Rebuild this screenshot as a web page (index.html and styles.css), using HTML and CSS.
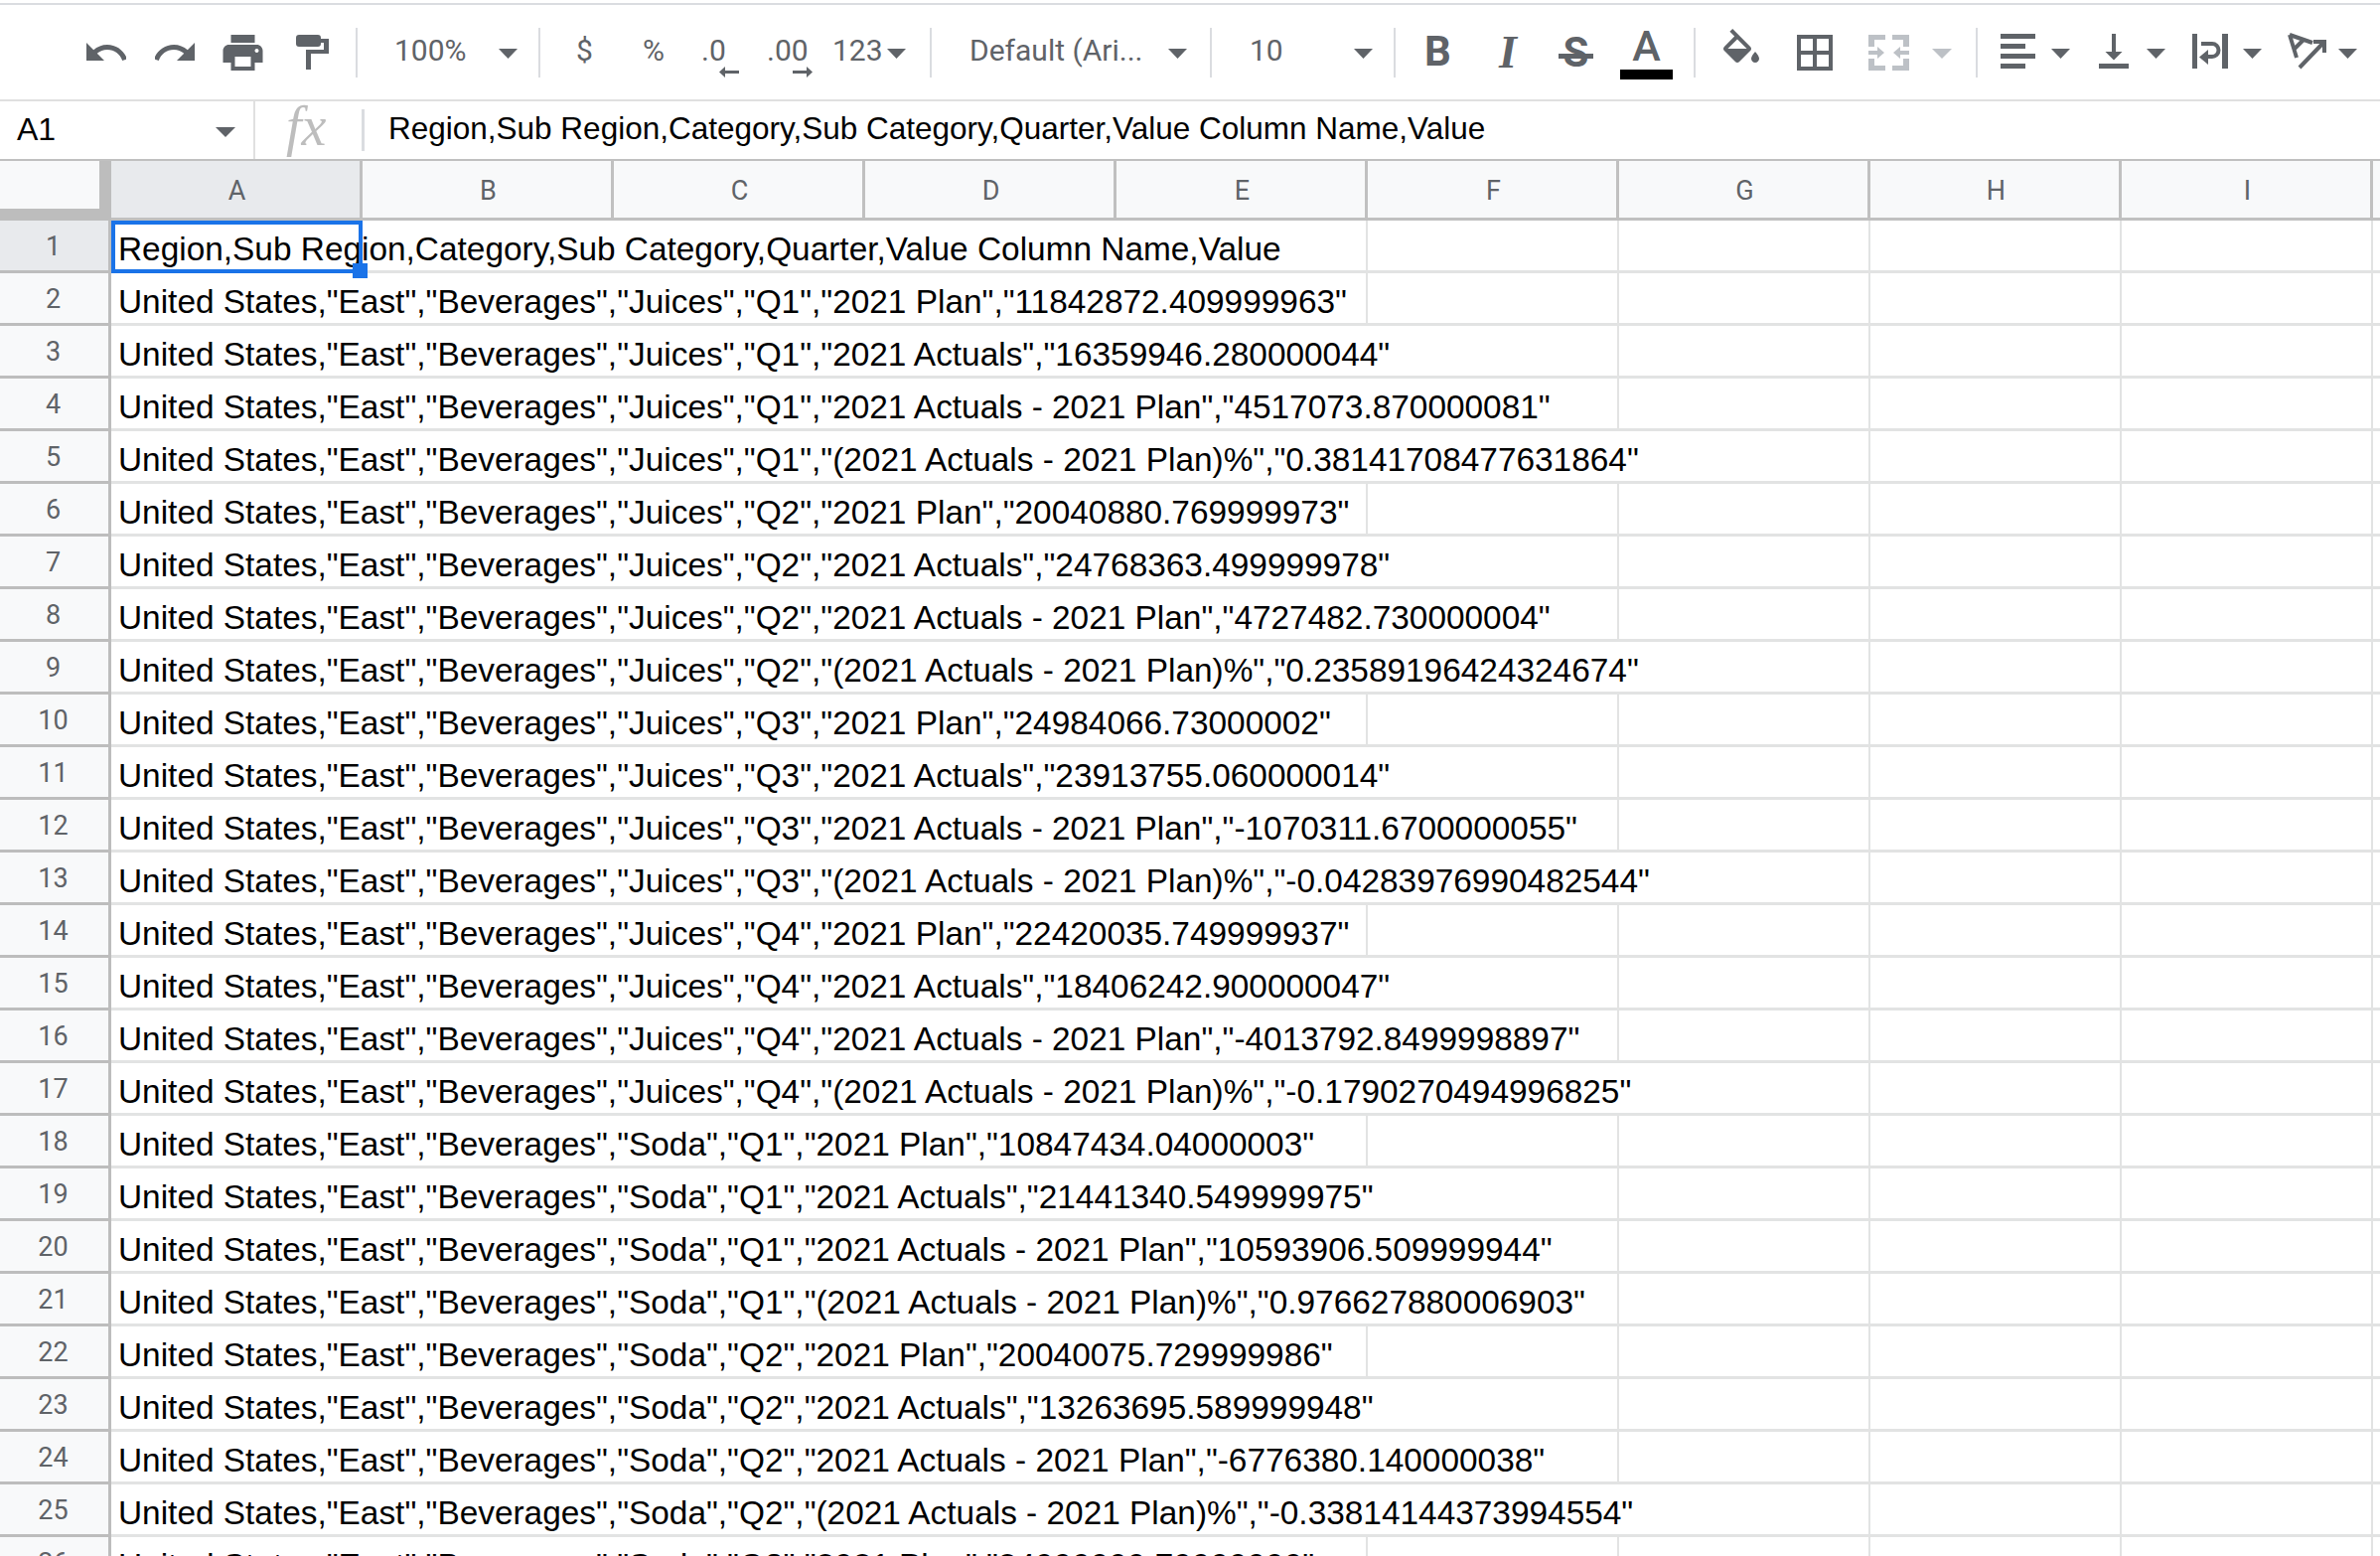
FILE: index.html
```html
<!DOCTYPE html>
<html lang="en">
<head>
    <meta charset="UTF-8">
    <meta name="viewport" content="width=device-width, initial-scale=1.0">
    <title>Sheet</title>
    <link rel="stylesheet" href="styles.css">
</head>
<body>
    <div class="top-gap"></div>

    <div class="toolbar">
        <svg class="ic undo" width="40" height="48" viewBox="2 0 20 24"><path d="M12.5 8c-2.65 0-5.05.99-6.9 2.6L2 7v9h9l-3.62-3.62c1.39-1.16 3.16-1.88 5.12-1.88 3.54 0 6.55 2.31 7.6 5.5l2.37-.78C21.08 11.03 17.15 8 12.5 8z"/></svg>
        <svg class="ic redo" width="40" height="48" viewBox="2 0 20 24"><path d="M18.4 10.6C16.55 8.99 14.15 8 11.5 8c-4.65 0-8.58 3.03-9.96 7.22L3.9 16c1.05-3.19 4.05-5.5 7.6-5.5 1.95 0 3.73.72 5.12 1.88L13 16h9V7l-3.6 3.6z"/></svg>
        <svg class="ic print" width="41" height="48" viewBox="2 0 20 24"><path d="M19 8H5c-1.66 0-3 1.34-3 3v6h4v4h12v-4h4v-6c0-1.66-1.34-3-3-3zm-3 11H8v-5h8v5zm3-7c-.55 0-1-.45-1-1s.45-1 1-1 1 .45 1 1-.45 1-1 1zm-1-9H6v4h12V3z"/></svg>
        <svg class="ic paint" width="33" height="48" viewBox="0 0 33 48"><path d="M3 6h19a3 3 0 0 1 3 3v1h8v15H15v16h-5V21h18v-7h-3v1a3 3 0 0 1-3 3H3a3 3 0 0 1-3-3V9a3 3 0 0 1 3-3z"/></svg>
        <span class="sep s1"></span>
        <span class="tb-text zoom-level">100%</span>
        <svg class="ic caret c-zoom" width="19" height="48" viewBox="0 0 19 48"><path d="M0 20h19l-9.5 10z"/></svg>
        <span class="sep s2"></span>
        <span class="tb-text dollar">$</span>
        <span class="tb-text percent">%</span>
        <span class="tb-text dec dec-less">.0<svg class="dec-arrow" width="20" height="11" viewBox="0 0 20 11"><path d="M0 5.5L6 0v4h14v3H6v4z"/></svg></span>
        <span class="tb-text dec dec-more">.00<svg class="dec-arrow" width="20" height="11" viewBox="0 0 20 11"><path d="M20 5.5L14 0v4H0v3h14v4z"/></svg></span>
        <span class="tb-text num-format">123</span>
        <svg class="ic caret c-num" width="19" height="48" viewBox="0 0 19 48"><path d="M0 20h19l-9.5 10z"/></svg>
        <span class="sep s3"></span>
        <span class="tb-text font-name">Default (Ari...</span>
        <svg class="ic caret c-font" width="19" height="48" viewBox="0 0 19 48"><path d="M0 20h19l-9.5 10z"/></svg>
        <span class="sep s4"></span>
        <span class="tb-text font-size">10</span>
        <svg class="ic caret c-size" width="19" height="48" viewBox="0 0 19 48"><path d="M0 20h19l-9.5 10z"/></svg>
        <span class="sep s5"></span>
        <span class="fmt bold">B</span>
        <span class="fmt italic">I</span>
        <span class="fmt strike">S</span>
        <span class="fmt text-color">A<span class="color-bar"></span></span>
        <span class="sep s6"></span>
        <svg class="ic fill" width="36" height="48" viewBox="3 0 18 24"><path d="M16.56 8.94L7.62 0 6.21 1.41l2.38 2.38-5.15 5.15c-.59.59-.59 1.54 0 2.12l5.5 5.5c.29.29.68.44 1.06.44s.77-.15 1.06-.44l5.5-5.5c.59-.58.59-1.53 0-2.12zM5.21 10L10 5.21 14.79 10H5.21zM19 11.5s-2 2.17-2 3.5c0 1.1.9 2 2 2s2-.9 2-2c0-1.33-2-3.5-2-3.5z"/></svg>
        <svg class="ic borders" width="36" height="48" viewBox="3 0 18 24"><path d="M3 3v18h18V3H3zm8 16H5v-6h6v6zm0-8H5V5h6v6zm8 8h-6v-6h6v6zm0-8h-6V5h6v6z"/></svg>
        <svg class="ic off merge" width="41" height="48" viewBox="0 0 41 48"><path d="M0 6h17v5H6v7H0zM24 6h17v12h-6v-7H24zM0 30h6v7h11v5H0zM35 30h6v12H24v-5h11zM0 22h9v-4l7 6-7 6v-4H0zM41 22h-9v-4l-7 6 7 6v-4h9z"/></svg>
        <svg class="ic off caret c-merge" width="20" height="48" viewBox="0 0 20 48"><path d="M0 20h20l-10 10z"/></svg>
        <span class="sep s7"></span>
        <svg class="ic align" width="35" height="48" viewBox="0 0 35 48"><path d="M0 5h35v5H0zM0 15h25v5H0zM0 25h35v5H0zM0 35h25v5H0z"/></svg>
        <svg class="ic caret c-align" width="19" height="48" viewBox="0 0 19 48"><path d="M0 20h19l-9.5 10z"/></svg>
        <svg class="ic valign" width="30" height="48" viewBox="0 0 30 48"><path d="M13 5h4v18h6.5L15 31.5 6.5 23H13zM0 35h30v5H0z"/></svg>
        <svg class="ic caret c-valign" width="19" height="48" viewBox="0 0 19 48"><path d="M0 20h19l-9.5 10z"/></svg>
        <svg class="ic wrap" width="36" height="48" viewBox="0 0 36 48"><path d="M0 5h5v35H0zM30 5h6v35h-6zM9 13h11a8.500 8.500 0 0 1 0 17h-5v-4h5a4.500 4.500 0 0 0 0-9H9zM16 21v15l-9-7.500z"/></svg>
        <svg class="ic caret c-wrap" width="19" height="48" viewBox="0 0 19 48"><path d="M0 20h19l-9.500 10z"/></svg>
        <svg class="ic rotate" width="39" height="48" viewBox="0 0 39 48"><g transform="translate(0 4)" fill="none" stroke="#5f6368" stroke-width="4"><path d="M2 2l23 8M2 2l7 23M16 7L6 17M12 35L37 9M26 9h11v11"/></g></svg>
        <svg class="ic caret c-rotate" width="19" height="48" viewBox="0 0 19 48"><path d="M0 20h19l-9.500 10z"/></svg>
    </div>

    <div class="formula-bar">
        <div class="name-box">
            <span class="cell-ref">A1</span>
            <svg class="ic" width="20" height="10" viewBox="0 0 20 10"><path d="M0 0h20L10 10z"/></svg>
        </div>
        <span class="fx">fx</span>
        <span class="fx-sep"></span>
        <span class="formula-text">Region,Sub Region,Category,Sub Category,Quarter,Value Column Name,Value</span>
    </div>

    <div class="col-headers">
        <div class="corner"></div>
        <div class="col active">A</div>
        <div class="col">B</div>
        <div class="col">C</div>
        <div class="col">D</div>
        <div class="col">E</div>
        <div class="col">F</div>
        <div class="col">G</div>
        <div class="col">H</div>
        <div class="col">I</div>
        <div class="col"></div>
    </div>

    <div class="sheet">
        <div class="row"><div class="num active">1</div><div class="cells"><div class="txt span5">Region,Sub Region,Category,Sub Category,Quarter,Value Column Name,Value<div class="selection"></div><div class="handle"></div></div></div></div>
        <div class="row"><div class="num">2</div><div class="cells"><div class="txt span5">United States,"East","Beverages","Juices","Q1","2021 Plan","11842872.409999963"</div></div></div>
        <div class="row"><div class="num">3</div><div class="cells"><div class="txt span6">United States,"East","Beverages","Juices","Q1","2021 Actuals","16359946.280000044"</div></div></div>
        <div class="row"><div class="num">4</div><div class="cells"><div class="txt span6">United States,"East","Beverages","Juices","Q1","2021 Actuals - 2021 Plan","4517073.870000081"</div></div></div>
        <div class="row"><div class="num">5</div><div class="cells"><div class="txt span7">United States,"East","Beverages","Juices","Q1","(2021 Actuals - 2021 Plan)%","0.38141708477631864"</div></div></div>
        <div class="row"><div class="num">6</div><div class="cells"><div class="txt span5">United States,"East","Beverages","Juices","Q2","2021 Plan","20040880.769999973"</div></div></div>
        <div class="row"><div class="num">7</div><div class="cells"><div class="txt span6">United States,"East","Beverages","Juices","Q2","2021 Actuals","24768363.499999978"</div></div></div>
        <div class="row"><div class="num">8</div><div class="cells"><div class="txt span6">United States,"East","Beverages","Juices","Q2","2021 Actuals - 2021 Plan","4727482.730000004"</div></div></div>
        <div class="row"><div class="num">9</div><div class="cells"><div class="txt span7">United States,"East","Beverages","Juices","Q2","(2021 Actuals - 2021 Plan)%","0.23589196424324674"</div></div></div>
        <div class="row"><div class="num">10</div><div class="cells"><div class="txt span5">United States,"East","Beverages","Juices","Q3","2021 Plan","24984066.73000002"</div></div></div>
        <div class="row"><div class="num">11</div><div class="cells"><div class="txt span6">United States,"East","Beverages","Juices","Q3","2021 Actuals","23913755.060000014"</div></div></div>
        <div class="row"><div class="num">12</div><div class="cells"><div class="txt span6">United States,"East","Beverages","Juices","Q3","2021 Actuals - 2021 Plan","-1070311.6700000055"</div></div></div>
        <div class="row"><div class="num">13</div><div class="cells"><div class="txt span7">United States,"East","Beverages","Juices","Q3","(2021 Actuals - 2021 Plan)%","-0.04283976990482544"</div></div></div>
        <div class="row"><div class="num">14</div><div class="cells"><div class="txt span5">United States,"East","Beverages","Juices","Q4","2021 Plan","22420035.749999937"</div></div></div>
        <div class="row"><div class="num">15</div><div class="cells"><div class="txt span6">United States,"East","Beverages","Juices","Q4","2021 Actuals","18406242.900000047"</div></div></div>
        <div class="row"><div class="num">16</div><div class="cells"><div class="txt span6">United States,"East","Beverages","Juices","Q4","2021 Actuals - 2021 Plan","-4013792.8499998897"</div></div></div>
        <div class="row"><div class="num">17</div><div class="cells"><div class="txt span7">United States,"East","Beverages","Juices","Q4","(2021 Actuals - 2021 Plan)%","-0.1790270494996825"</div></div></div>
        <div class="row"><div class="num">18</div><div class="cells"><div class="txt span5">United States,"East","Beverages","Soda","Q1","2021 Plan","10847434.04000003"</div></div></div>
        <div class="row"><div class="num">19</div><div class="cells"><div class="txt span6">United States,"East","Beverages","Soda","Q1","2021 Actuals","21441340.549999975"</div></div></div>
        <div class="row"><div class="num">20</div><div class="cells"><div class="txt span6">United States,"East","Beverages","Soda","Q1","2021 Actuals - 2021 Plan","10593906.509999944"</div></div></div>
        <div class="row"><div class="num">21</div><div class="cells"><div class="txt span6">United States,"East","Beverages","Soda","Q1","(2021 Actuals - 2021 Plan)%","0.976627880006903"</div></div></div>
        <div class="row"><div class="num">22</div><div class="cells"><div class="txt span5">United States,"East","Beverages","Soda","Q2","2021 Plan","20040075.729999986"</div></div></div>
        <div class="row"><div class="num">23</div><div class="cells"><div class="txt span6">United States,"East","Beverages","Soda","Q2","2021 Actuals","13263695.589999948"</div></div></div>
        <div class="row"><div class="num">24</div><div class="cells"><div class="txt span6">United States,"East","Beverages","Soda","Q2","2021 Actuals - 2021 Plan","-6776380.140000038"</div></div></div>
        <div class="row"><div class="num">25</div><div class="cells"><div class="txt span7">United States,"East","Beverages","Soda","Q2","(2021 Actuals - 2021 Plan)%","-0.33814144373994554"</div></div></div>
        <div class="row"><div class="num">26</div><div class="cells"><div class="txt span5">United States,"East","Beverages","Soda","Q3","2021 Plan","24000000.70000000"</div></div></div>
    </div>
</body>
</html>
```
FILE: styles.css
```css
html, body {
    height: 100%;
    overflow: hidden;
}
body {
    margin: 0;
    background: #fff;
    font-family: Roboto, "Liberation Sans", sans-serif;
    color: #000;
}
.top-gap {
    height: 3px;
    border-bottom: 2px solid #dadce0;
}

/* toolbar */
.toolbar {
    display: flex;
    align-items: center;
    height: 95px;
    border-bottom: 2px solid #e0e0e0;
    white-space: nowrap;
    color: #5f6368;
}
.ic {
    flex: none;
    fill: #5f6368;
}
.ic.off {
    fill: #bdc1c6;
}
.sep {
    flex: none;
    width: 2px;
    height: 50px;
    background: #dadce0;
}
.tb-text {
    flex: none;
    font-size: 30px;
    line-height: 36px;
    margin-bottom: 4px;
}
.fmt {
    flex: none;
    line-height: 48px;
}
.dec {
    position: relative;
}
.dec-arrow {
    position: absolute;
    left: 18px;
    top: 34px;
    fill: #5f6368;
}
.dec-more .dec-arrow {
    left: 26px;
}

.undo { margin-left: 87px; }
.redo { margin-left: 29px; }
.print { margin-left: 28px; }
.paint { margin-left: 33px; }
.s1 { margin-left: 27px; }
.zoom-level { margin-left: 37px; width: 72px; }
.c-zoom { margin-left: 33px; }
.s2 { margin-left: 21px; }
.dollar { margin-left: 36px; width: 16px; }
.percent { margin-left: 51px; width: 22px; }
.dec-less { margin-left: 37px; width: 25px; }
.dec-more { margin-left: 41px; width: 41px; }
.num-format { margin-left: 25px; width: 49px; }
.c-num { margin-left: 6px; }
.s3 { margin-left: 24px; }
.font-name { margin-left: 38px; width: 173px; }
.c-font { margin-left: 27px; }
.s4 { margin-left: 23px; }
.font-size { margin-left: 38px; width: 32px; }
.c-size { margin-left: 73px; }
.s5 { margin-left: 21px; }
.s6 { margin-left: 21px; }
.fill { margin-left: 28px; }
.borders { margin-left: 38px; }
.merge { margin-left: 36px; }
.c-merge { margin-left: 23px; }
.s7 { margin-left: 24px; }
.align { margin-left: 23px; }
.c-align { margin-left: 16px; }
.valign { margin-left: 29px; }
.c-valign { margin-left: 18px; }
.wrap { margin-left: 27px; }
.c-wrap { margin-left: 15px; }
.rotate { margin-left: 26px; }
.c-rotate { margin-left: 12px; }

.bold {
    margin-left: 29px;
    width: 28px;
    font-size: 42px;
    font-weight: 700;
    margin-top: -2px;
}
.italic {
    margin-left: 41px;
    width: 30px;
    font-family: "Liberation Serif", serif;
    font-size: 46px;
    font-style: italic;
    font-weight: 700;
    text-align: center;
}
.strike {
    position: relative;
    margin-left: 36px;
    width: 35px;
    font-size: 42px;
    font-weight: 700;
    text-align: center;
}
.strike::after {
    content: "";
    position: absolute;
    left: 0;
    right: 0;
    top: 25px;
    height: 5px;
    background: #5f6368;
}
.text-color {
    position: relative;
    margin-left: 27px;
    width: 53px;
    font-size: 43px;
    font-weight: 500;
    text-align: center;
    margin-bottom: 14px;
}
.color-bar {
    position: absolute;
    left: 0;
    top: 48px;
    width: 53px;
    height: 10px;
    background: #000;
}

/* formula bar */
.formula-bar {
    display: flex;
    align-items: center;
    height: 58px;
}
.name-box {
    display: flex;
    align-items: center;
    justify-content: space-between;
    box-sizing: border-box;
    width: 257px;
    height: 58px;
    padding: 4px 18px 0 17px;
    border-right: 2px solid #e0e0e0;
}
.cell-ref {
    font-family: "Liberation Sans", sans-serif;
    font-size: 32px;
    margin-top: -6px;
}
.fx {
    margin-left: 31px;
    width: 76px;
    font-family: "Liberation Serif", serif;
    font-style: italic;
    font-size: 56px;
    color: #bdbdbd;
    margin-top: -8px;
}
.fx-sep {
    width: 3px;
    height: 42px;
    background: #dadce0;
}
.formula-text {
    margin-left: 24px;
    font-family: "Liberation Sans", sans-serif;
    font-size: 31.500px;
    margin-top: -3px;
    white-space: nowrap;
}

/* column headers */
.col-headers {
    display: flex;
    height: 60px;
    border-top: 2px solid #c0c0c0;
}
.corner {
    flex: none;
    box-sizing: border-box;
    width: 112px;
    height: 60px;
    background: #f8f9fa;
    border-right: 12px solid #bdbdbd;
    border-bottom: 12px solid #bdbdbd;
}
.col {
    flex: none;
    box-sizing: border-box;
    width: 253px;
    height: 60px;
    padding-left: 3px;
    background: #f8f9fa;
    border-right: 3px solid #c0c0c0;
    border-bottom: 3px solid #c0c0c0;
    color: #5f6368;
    font-size: 27px;
    line-height: 60px;
    text-align: center;
}
.col.active {
    background: #e8eaed;
}
.col:last-child {
    flex: 1;
    width: auto;
    min-width: 0;
    border-right: 0;
}

/* rows */
.row {
    display: flex;
    height: 53px;
}
.num {
    flex: none;
    box-sizing: border-box;
    width: 112px;
    height: 53px;
    padding-right: 2px;
    background: #f8f9fa;
    border-right: 3px solid #bdbdbd;
    border-bottom: 3px solid #bdbdbd;
    color: #5f6368;
    font-size: 27px;
    line-height: 53px;
    text-align: center;
}
.num.active {
    background: #e8eaed;
}
.cells {
    flex: 1;
    min-width: 0;
    height: 53px;
    box-sizing: border-box;
    border-bottom: 3px solid #e2e3e3;
    background: repeating-linear-gradient(to right, #fff 0, #fff 251px, #e2e3e3 251px, #e2e3e3 253px);
}
.txt {
    position: relative;
    box-sizing: border-box;
    height: 50px;
    padding: 0 0 0 7px;
    background: #fff;
    font-family: "Liberation Sans", sans-serif;
    font-size: 33.400px;
    line-height: 57px;
    white-space: nowrap;
}
.span5 { width: 1263px; }
.span6 { width: 1516px; }
.span7 { width: 1769px; }

.selection {
    position: absolute;
    z-index: 2;
    left: 0;
    top: 0;
    box-sizing: border-box;
    width: 253px;
    height: 53px;
    border: 4px solid #1a73e8;
}
.handle {
    position: absolute;
    z-index: 3;
    left: 243px;
    top: 43px;
    width: 15px;
    height: 15px;
    background: #1a73e8;
}
```
